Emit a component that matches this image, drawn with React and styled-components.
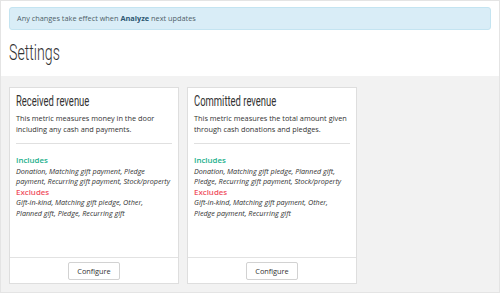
import React from "react";
import styled, { createGlobalStyle } from "styled-components";

const GlobalStyle = createGlobalStyle`
  html, body { margin: 0; padding: 0; }
  body { font-family: "Open Sans", "DejaVu Sans", sans-serif; color: #333; }
  * { box-sizing: border-box; }
`;

const Frame = styled.div`
  width: 500px;
  height: 293px;
  border: 1px solid #e4e4e4;
  background: #f2f2f2;
  display: flex;
  flex-direction: column;
`;

const Header = styled.header`
  background: #fff;
  height: 75px;
  padding: 6px 8px 0 8px;
`;

const Alert = styled.div`
  height: 23px;
  background: #d9edf7;
  border: 1px solid #c4e4f1;
  border-radius: 3px;
  padding: 0 7px;
  font-size: 7.35px;
  line-height: 21px;
  color: #4f5f69;
  b { color: #2d5873; font-weight: 700; }
`;

const Condensed = styled.span`
  display: inline-block;
  white-space: nowrap;
  transform: scaleX(0.63);
  transform-origin: left center;
`;

const Title = styled.h1`
  margin: 8px 0 0 0;
  font-family: Roboto, "DejaVu Sans Condensed", sans-serif;
  font-weight: 300;
  font-size: 22.5px;
  line-height: 28px;
  color: #333;
`;

const Content = styled.main`
  flex: 1;
  display: flex;
  gap: 8px;
  padding: 11px 8px 8px 8px;
`;

const Card = styled.section`
  width: 170px;
  background: #fff;
  border: 1px solid #dedede;
  display: flex;
  flex-direction: column;
`;

const CardBody = styled.div`
  flex: 1;
  padding: 4px 6px 0 6px;
`;

const CardTitle = styled.h2`
  margin: 0;
  font-family: Roboto, "DejaVu Sans Condensed", sans-serif;
  font-weight: 400;
  font-size: 15px;
  line-height: 19px;
  color: #333;
`;

const Desc = styled.p`
  margin: 2px 0 0 0;
  font-size: 7.35px;
  line-height: 11px;
  color: #333;
`;

const Divider = styled.hr`
  margin: 8px 0 11px 0;
  border: 0;
  border-top: 1px solid #e0e0e0;
`;

const Label = styled.div`
  font-size: 7.9px;
  font-weight: 600;
  line-height: 10.5px;
  color: ${(p) => (p.$tone === "in" ? "#1aaf8b" : "#f0505f")};
`;

const List = styled.div`
  font-size: 7.2px;
  font-style: italic;
  line-height: 10.5px;
  color: #333;
`;

const ListLine = styled.span`
  display: block;
  white-space: nowrap;
`;

const CardFooter = styled.footer`
  border-top: 1px solid #e2e2e2;
  height: 26px;
  display: flex;
  align-items: center;
  justify-content: center;
`;

const Button = styled.button`
  height: 18px;
  padding: 0 8px;
  background: #fff;
  border: 1px solid #d2d2d2;
  border-radius: 2px;
  font-family: "Open Sans", sans-serif;
  font-size: 7.35px;
  color: #333;
`;

const cards = [
  {
    title: "Received revenue",
    desc: "This metric measures money in the door including any cash and payments.",
    includes: ["Donation, Matching gift payment, Pledge", "payment, Recurring gift payment, Stock/property"],
    excludes: ["Gift-in-kind, Matching gift pledge, Other,", "Planned gift, Pledge, Recurring gift"],
  },
  {
    title: "Committed revenue",
    desc: "This metric measures the total amount given through cash donations and pledges.",
    includes: ["Donation, Matching gift pledge, Planned gift,", "Pledge, Recurring gift payment, Stock/property"],
    excludes: ["Gift-in-kind, Matching gift payment, Other,", "Pledge payment, Recurring gift"],
  },
];

export default function App() {
  return (
    <>
      <GlobalStyle />
      <Frame>
        <Header>
          <Alert>
            Any changes take effect when <b>Analyze</b> next updates
          </Alert>
          <Title><Condensed>Settings</Condensed></Title>
        </Header>
        <Content>
          {cards.map((c) => (
            <Card key={c.title}>
              <CardBody>
                <CardTitle><Condensed>{c.title}</Condensed></CardTitle>
                <Desc>{c.desc}</Desc>
                <Divider />
                <Label $tone="in">Includes</Label>
                <List>
                  {c.includes.map((l) => <ListLine key={l}>{l}</ListLine>)}
                </List>
                <Label $tone="out">Excludes</Label>
                <List>
                  {c.excludes.map((l) => <ListLine key={l}>{l}</ListLine>)}
                </List>
              </CardBody>
              <CardFooter>
                <Button>Configure</Button>
              </CardFooter>
            </Card>
          ))}
        </Content>
      </Frame>
    </>
  );
}
